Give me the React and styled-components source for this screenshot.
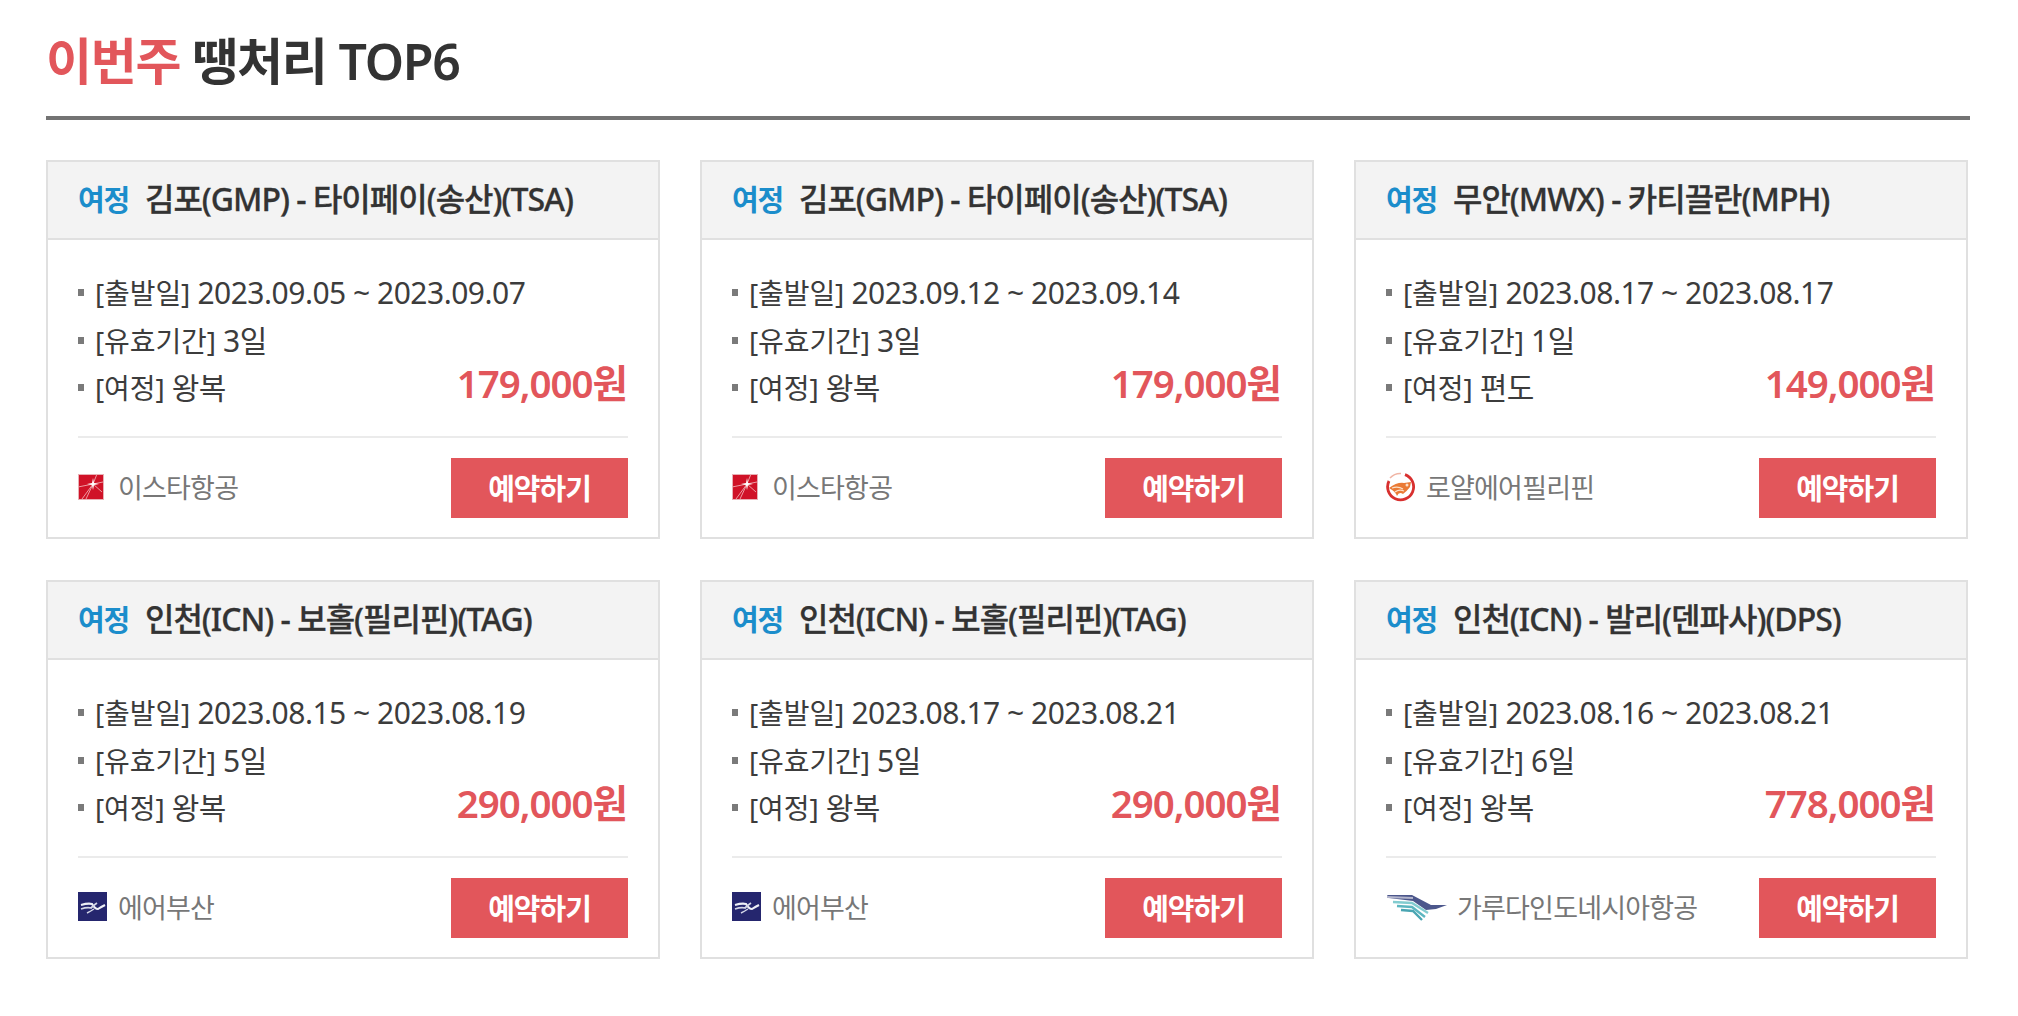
import React from "react";
import styled, { createGlobalStyle } from "styled-components";

const Global = createGlobalStyle`
  html, body { margin: 0; padding: 0; background: #fff; }
  body { font-family: "Noto Sans", "Noto Sans CJK KR", sans-serif; color: #333; }
`;

const Page = styled.main`
  width: 2018px;
  height: 1016px;
  box-sizing: border-box;
  padding: 0 48px 0 46px;
  overflow: hidden;
`;
const TitleBar = styled.h2`
  margin: 0 0 40px;
  height: 116px;
  border-bottom: 4px solid #737373;
  display: flex;
  align-items: center;
  font-size: 50px;
  font-weight: 600;
  letter-spacing: -1.2px;
  color: #333;
  white-space: pre;
`;
const Accent = styled.span`
  color: #e2565b;
`;
const Grid = styled.div`
  display: grid;
  grid-template-columns: repeat(3, 614px);
  column-gap: 40px;
  row-gap: 41px;
`;
const Card = styled.article`
  border: 2px solid #e0e0e0;
  box-sizing: border-box;
  height: 379px;
  display: flex;
  flex-direction: column;
  background: #fff;
`;
const CardHead = styled.header`
  height: 76px;
  box-sizing: border-box;
  background: #f3f3f3;
  padding: 0 30px 6px;
  display: flex;
  align-items: center;
  gap: 16px;
  color: #333;
  white-space: nowrap;
`;
const HeadRule = styled.hr`
  margin: 0;
  border: 0;
  height: 2px;
  background: #e0e0e0;
`;
const Tag = styled.span`
  font-size: 29px;
  font-weight: 600;
  letter-spacing: -1.2px;
  padding-top: 2px;
  color: #1b8dcb;
`;
const Route = styled.span`
  font-size: 32px;
  font-weight: 500;
  letter-spacing: -1px;
  -webkit-text-stroke: 0.3px #333;
`;
const CardBody = styled.div`
  flex: 1;
  padding: 29px 30px 0;
  display: flex;
  flex-direction: column;
`;
const Infos = styled.div`
  position: relative;
  padding-bottom: 24.5px;
  border-bottom: 2px solid #ebebeb;
`;
const InfoRow = styled.div`
  height: 47.5px;
  line-height: 47.5px;
  font-size: 28px;
  letter-spacing: -0.1px;
  color: #3c3c3c;
  padding-left: 17px;
  position: relative;
  white-space: nowrap;
  &::before {
    content: "";
    position: absolute;
    left: 0;
    top: 20px;
    width: 6px;
    height: 7px;
    background: #7a7a7a;
  }
`;
const Value = styled.span`
  font-size: 30px;
  letter-spacing: -0.5px;
`;
const Price = styled.strong`
  position: absolute;
  right: 1px;
  bottom: 29px;
  font-size: 38.5px;
  line-height: 48px;
  font-weight: 600;
  letter-spacing: -1px;
  color: #e2565b;
`;
const Foot = styled.footer`
  flex: 1;
  display: flex;
  align-items: center;
  justify-content: space-between;
  padding-top: 1px;
`;
const Airline = styled.div`
  display: flex;
  align-items: center;
  gap: ${(p) => p.$gap}px;
  padding-bottom: 3px;
  font-size: 27px;
  letter-spacing: -0.8px;
  color: #777;
  white-space: nowrap;
  svg {
    filter: blur(0.4px);
  }
`;
const BookButton = styled.button`
  width: 177px;
  height: 60px;
  border: 0;
  padding: 0 0 3px;
  background: #e2565b;
  color: #fff;
  font-family: inherit;
  font-size: 29px;
  font-weight: 600;
  letter-spacing: -1px;
`;

const Eastar = () => (
  <svg width="26" height="26" viewBox="0 0 26 26">
    <rect x="0.5" y="0.5" width="25" height="25" fill="#d01227" stroke="#e8b0b5" />
    <path d="M4 25 L15 10 L19 0 M15 10 L25 8 M0 13 L15 10 M8 25 L15 10 L24 18" stroke="#f0aab0" strokeWidth="0.9" fill="none" />
    <path d="M15 4 L16 9 L21 10 L16 11 L15 16 L14 11 L9 10 L14 9Z" fill="#fff" />
  </svg>
);
const Royal = () => (
  <svg width="30" height="30" viewBox="0 0 30 30">
    <path d="M19 2.6 A13 13 0 1 1 3 9" fill="none" stroke="#d8302f" strokeWidth="2.8" />
    <path d="M15 1.5 A14 14 0 0 0 4 6" fill="none" stroke="#f0b5a5" strokeWidth="1.5" />
    <path d="M3 16 Q11 10 18 11 L25 10 L24 15 Q21 19 17 22 Q13 19 11 24 Q9 19 3 16Z" fill="#ea7a35" />
    <path d="M6 16 Q12 14 17 17 M9 20 Q13 17 18 19" stroke="#fbe0c8" strokeWidth="1.2" fill="none" />
    <circle cx="21" cy="13" r="1.5" fill="#fbe0c8" />
  </svg>
);
const AirBusan = () => (
  <svg width="29" height="29" viewBox="0 0 29 29">
    <rect width="29" height="29" fill="#25266e" />
    <path d="M3 13 Q10 11 14 12 Q17 17 20 17 Q23 15 27 13" stroke="#eef0f6" strokeWidth="2.1" fill="none" />
    <path d="M3 17 Q9 15 13 16 Q16 13 19 11" stroke="#d3d6e6" strokeWidth="1.8" fill="none" />
    <path d="M9 21 Q13 19 16 17" stroke="#d3d6e6" strokeWidth="1.5" fill="none" />
  </svg>
);
const Garuda = () => (
  <svg width="62" height="30" viewBox="0 0 62 30">
    <path d="M1 3 L26 3 L45 13 L61 13 L50 17 L40 18 L27 9 L3 6Z" fill="#2d3a78" opacity="0.85" />
    <path d="M1 5 L27 6" stroke="#b4b6cd" strokeWidth="2" />
    <path d="M7 10 L26 11 L42 21" stroke="#6cc3c8" strokeWidth="2.4" fill="none" opacity="0.85" />
    <path d="M11 14 L26 15 L39 25" stroke="#3fa9b5" strokeWidth="2.4" fill="none" opacity="0.85" />
    <path d="M15 18 L27 19 L36 28" stroke="#2a95a4" strokeWidth="2.4" fill="none" opacity="0.85" />
  </svg>
);

const deals = [
  { route: "김포(GMP) - 타이페이(송산)(TSA)", date: "2023.09.05 ~ 2023.09.07", valid: "3일", trip: "왕복", price: "179,000원", airline: "이스타항공", Logo: Eastar, gap: 14 },
  { route: "김포(GMP) - 타이페이(송산)(TSA)", date: "2023.09.12 ~ 2023.09.14", valid: "3일", trip: "왕복", price: "179,000원", airline: "이스타항공", Logo: Eastar, gap: 14 },
  { route: "무안(MWX) - 카티끌란(MPH)", date: "2023.08.17 ~ 2023.08.17", valid: "1일", trip: "편도", price: "149,000원", airline: "로얄에어필리핀", Logo: Royal, gap: 10 },
  { route: "인천(ICN) - 보홀(필리핀)(TAG)", date: "2023.08.15 ~ 2023.08.19", valid: "5일", trip: "왕복", price: "290,000원", airline: "에어부산", Logo: AirBusan, gap: 11 },
  { route: "인천(ICN) - 보홀(필리핀)(TAG)", date: "2023.08.17 ~ 2023.08.21", valid: "5일", trip: "왕복", price: "290,000원", airline: "에어부산", Logo: AirBusan, gap: 11 },
  { route: "인천(ICN) - 발리(덴파사)(DPS)", date: "2023.08.16 ~ 2023.08.21", valid: "6일", trip: "왕복", price: "778,000원", airline: "가루다인도네시아항공", Logo: Garuda, gap: 9 },
];

export default function App() {
  return (
    <Page>
      <Global />
      <TitleBar>
        <Accent>이번주</Accent> 땡처리 TOP6
      </TitleBar>
      <Grid>
        {deals.map((d, i) => (
          <Card key={i}>
            <CardHead>
              <Tag>여정</Tag>
              <Route>{d.route}</Route>
            </CardHead>
            <HeadRule />
            <CardBody>
              <Infos>
                <InfoRow>[출발일] <Value>{d.date}</Value></InfoRow>
                <InfoRow>[유효기간] <Value>{d.valid}</Value></InfoRow>
                <InfoRow>[여정] <Value>{d.trip}</Value></InfoRow>
                <Price>{d.price}</Price>
              </Infos>
              <Foot>
                <Airline $gap={d.gap}>
                  <d.Logo />
                  {d.airline}
                </Airline>
                <BookButton>예약하기</BookButton>
              </Foot>
            </CardBody>
          </Card>
        ))}
      </Grid>
    </Page>
  );
}
